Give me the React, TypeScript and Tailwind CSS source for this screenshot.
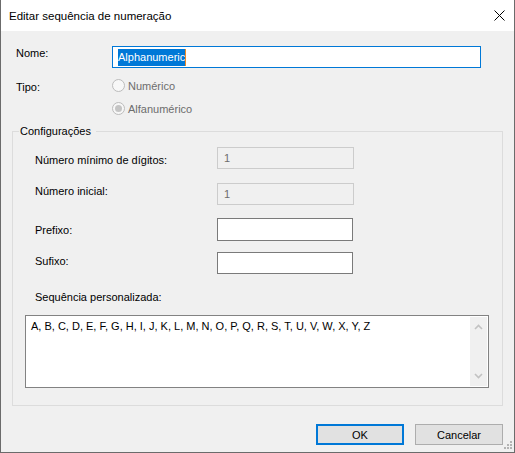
import React from "react";

const Radio = ({ label, checked }: { label: string; checked?: boolean }) => (
  <div className="flex items-center h-[13px]">
    <span className="w-[13px] h-[13px] rounded-full border border-[#bcbcbc] bg-[#f7f7f7] flex items-center justify-center">
      {checked && <span className="w-[7px] h-[7px] rounded-full bg-[#c4c4c4]" />}
    </span>
    <span className="ml-[3px] text-[#6d6d6d]">{label}</span>
  </div>
);

const Chevron = ({ down }: { down?: boolean }) => (
  <svg width="9" height="6" viewBox="0 0 9 6">
    <path
      d={down ? "M1 1L4.5 4.5L8 1" : "M1 5L4.5 1.5L8 5"}
      fill="none"
      stroke="#c2c2c2"
      strokeWidth="1.6"
    />
  </svg>
);

export default function App() {
  return (
    <div className="relative w-[515px] h-[453px] flex flex-col border-x border-b border-[#6b6b6b] bg-[#f0f0f0] text-black font-['Liberation_Sans',Arial,sans-serif] text-[11px] leading-[14px]">
      <div className="h-[31px] shrink-0 bg-white flex items-center justify-between pl-[8px] pr-[9px]">
        <span className="text-[11.5px]">Editar sequência de numeração</span>
        <svg width="11" height="11" viewBox="0 0 11 11">
          <path d="M0.5 0.5L10.5 10.5M10.5 0.5L0.5 10.5" stroke="#000" strokeWidth="1" />
        </svg>
      </div>

      <div className="flex-1 flex flex-col px-[11px]">
        {/* Nome */}
        <div className="flex items-start mt-[15px] pl-[4px]">
          <span className="w-[96px]">Nome:</span>
          <div className="w-[369px] h-[22px] border border-[#0078d7] bg-white flex items-center pl-[5px]">
            <span className="bg-[#0078d7] text-white leading-[17px]">Alphanumeric</span>
            <span className="w-[1px] h-[17px] bg-[#f08a24]" />
          </div>
        </div>

        {/* Tipo */}
        <div className="flex items-start mt-[11px] pl-[4px]">
          <span className="w-[96px] mt-[1px]">Tipo:</span>
          <div className="flex flex-col gap-[10px]">
            <Radio label="Numérico" />
            <Radio label="Alfanumérico" checked />
          </div>
        </div>

        {/* Configurações */}
        <fieldset className="mt-[9px] border border-[#dcdcdc] p-0 m-0">
          <legend className="ml-[6px] pl-[1px] pr-[5px]">Configurações</legend>
          <div className="flex flex-col pl-[12px] pb-[17px]">
            <div className="flex items-start mt-[9px]">
              <span className="w-[182px] ml-[10px] mt-[6px]">Número mínimo de dígitos:</span>
              <div className="w-[137px] h-[22px] border border-[#cccccc] bg-[#f0f0f0] flex items-center pl-[6px] text-[#6d6d6d]">
                1
              </div>
            </div>
            <div className="flex items-start mt-[14px]">
              <span className="w-[182px] ml-[10px] mt-[1px]">Número inicial:</span>
              <div className="w-[137px] h-[22px] border border-[#cccccc] bg-[#f0f0f0] flex items-center pl-[6px] text-[#6d6d6d]">
                1
              </div>
            </div>
            <div className="flex items-start mt-[13px]">
              <span className="w-[182px] ml-[10px] mt-[5px]">Prefixo:</span>
              <div className="w-[136px] h-[23px] border border-[#7a7a7a] bg-white" />
            </div>
            <div className="flex items-start mt-[11px]">
              <span className="w-[182px] ml-[10px] mt-[2px]">Sufixo:</span>
              <div className="w-[136px] h-[22px] border border-[#7a7a7a] bg-white" />
            </div>
            <span className="ml-[10px] mt-[16px]">Sequência personalizada:</span>
            <div className="mt-[11px] w-[464px] h-[73px] border border-[#828282] bg-white flex p-[1px]">
              <div className="flex-1 pl-[4px] pt-[2px]">
                A, B, C, D, E, F, G, H, I, J, K, L, M, N, O, P, Q, R, S, T, U, V, W, X, Y, Z
              </div>
              <div className="w-[17px] bg-[#f0f0f0] flex flex-col items-center justify-between py-[7px]">
                <Chevron />
                <Chevron down />
              </div>
            </div>
          </div>
        </fieldset>

        {/* Botões */}
        <div className="flex justify-end gap-[11px] mt-[18px]">
          <button className="w-[88px] h-[21px] border-2 border-[#0078d7] bg-[#e1e1e1] flex items-center justify-center">
            OK
          </button>
          <button className="w-[88px] h-[21px] border border-[#adadad] bg-[#e1e1e1] flex items-center justify-center">
            Cancelar
          </button>
        </div>
      </div>

      <svg className="absolute right-[1px] bottom-[1px]" width="12" height="12" viewBox="0 0 12 12">
        <rect x="9" y="2" width="2" height="2" fill="#b4b4b4" />
        <rect x="6" y="5" width="2" height="2" fill="#b4b4b4" />
        <rect x="9" y="5" width="2" height="2" fill="#b4b4b4" />
        <rect x="3" y="8" width="2" height="2" fill="#b4b4b4" />
        <rect x="6" y="8" width="2" height="2" fill="#b4b4b4" />
        <rect x="9" y="8" width="2" height="2" fill="#b4b4b4" />
      </svg>
    </div>
  );
}
